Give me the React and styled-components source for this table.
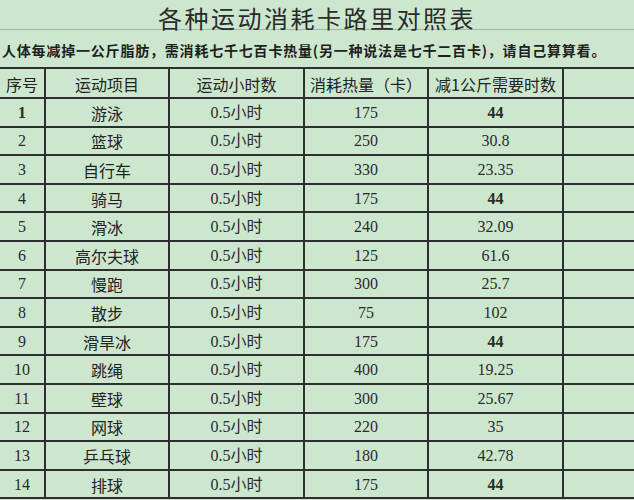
import React from "react";
import styled, { createGlobalStyle } from "styled-components";

const BG = "#cde7cf";
const LINE = "#2e2e2e";
const COLS = "44px 124px 135px 124px 135px 1fr";

const Global = createGlobalStyle`
  html, body { margin: 0; padding: 0; background: ${BG}; }
  * { box-sizing: border-box; }
`;

const Page = styled.div`
  width: 634px;
  height: 500px;
  overflow: hidden;
  background: ${BG};
  display: flex;
  flex-direction: column;
`;

const Title = styled.h1`
  margin: 0;
  height: 30px;
  padding-top: 6px;
  border-bottom: 1px solid #9fb7a2;
  text-align: center;
  font-family: "Noto Sans CJK SC", sans-serif;
  font-weight: 400;
  font-size: 24px;
  letter-spacing: 2.5px;
  line-height: 23px;
  color: #2a2a2a;
`;

const Note = styled.p`
  margin: 0;
  height: 37px;
  padding: 3px 0 0 2px;
  display: flex;
  align-items: center;
  font-family: "Noto Sans CJK SC", sans-serif;
  font-weight: 700;
  font-size: 14px;
  letter-spacing: 0.8px;
  color: #1e1e1e;
  white-space: nowrap;
`;

const Table = styled.div`
  border-top: 2px solid ${LINE};
  display: flex;
  flex-direction: column;
`;

const Row = styled.div`
  display: grid;
  grid-template-columns: ${COLS};
  height: ${(p) => p.$h}px;
  flex: none;
`;

const Cell = styled.div`
  border-bottom: 2px solid ${LINE};
  display: flex;
  align-items: center;
  justify-content: center;
  white-space: nowrap;
  color: ${(p) => (p.$num ? "#2b2b2b" : "#222")};
  font-family: ${(p) =>
    p.$num
      ? `"Liberation Serif", "Noto Sans CJK SC", serif`
      : `"Noto Sans CJK SC", sans-serif`};
  font-size: 16px;
  font-weight: ${(p) => (p.$bold ? 700 : 400)};
  line-height: 1;
  padding-top: 1px;
  & + & {
    border-left: 2px solid ${LINE};
  }
`;

const rows = [
  ["1", "游泳", "175", "44", true, true],
  ["2", "篮球", "250", "30.8"],
  ["3", "自行车", "330", "23.35"],
  ["4", "骑马", "175", "44", false, true],
  ["5", "滑冰", "240", "32.09"],
  ["6", "高尔夫球", "125", "61.6"],
  ["7", "慢跑", "300", "25.7"],
  ["8", "散步", "75", "102"],
  ["9", "滑旱冰", "175", "44", false, true],
  ["10", "跳绳", "400", "19.25"],
  ["11", "壁球", "300", "25.67"],
  ["12", "网球", "220", "35"],
  ["13", "乒乓球", "180", "42.78"],
  ["14", "排球", "175", "44", false, true],
];

const headers = ["序号", "运动项目", "运动小时数", "消耗热量（卡）", "减1公斤需要时数", ""];

export default function App() {
  return (
    <Page>
      <Global />
      <Title>各种运动消耗卡路里对照表</Title>
      <Note>人体每减掉一公斤脂肪，需消耗七千七百卡热量(另一种说法是七千二百卡)，请自己算算看。</Note>
      <Table>
        <Row $h={30}>
          {headers.map((h, i) => (
            <Cell key={i}>{h}</Cell>
          ))}
        </Row>
        {rows.map(([n, name, kcal, hrs, boldN, boldH]) => (
          <Row key={n} $h={28.6}>
            <Cell $num $bold={boldN}>{n}</Cell>
            <Cell>{name}</Cell>
            <Cell $num>0.5小时</Cell>
            <Cell $num>{kcal}</Cell>
            <Cell $num $bold={boldH}>{hrs}</Cell>
            <Cell />
          </Row>
        ))}
      </Table>
    </Page>
  );
}
